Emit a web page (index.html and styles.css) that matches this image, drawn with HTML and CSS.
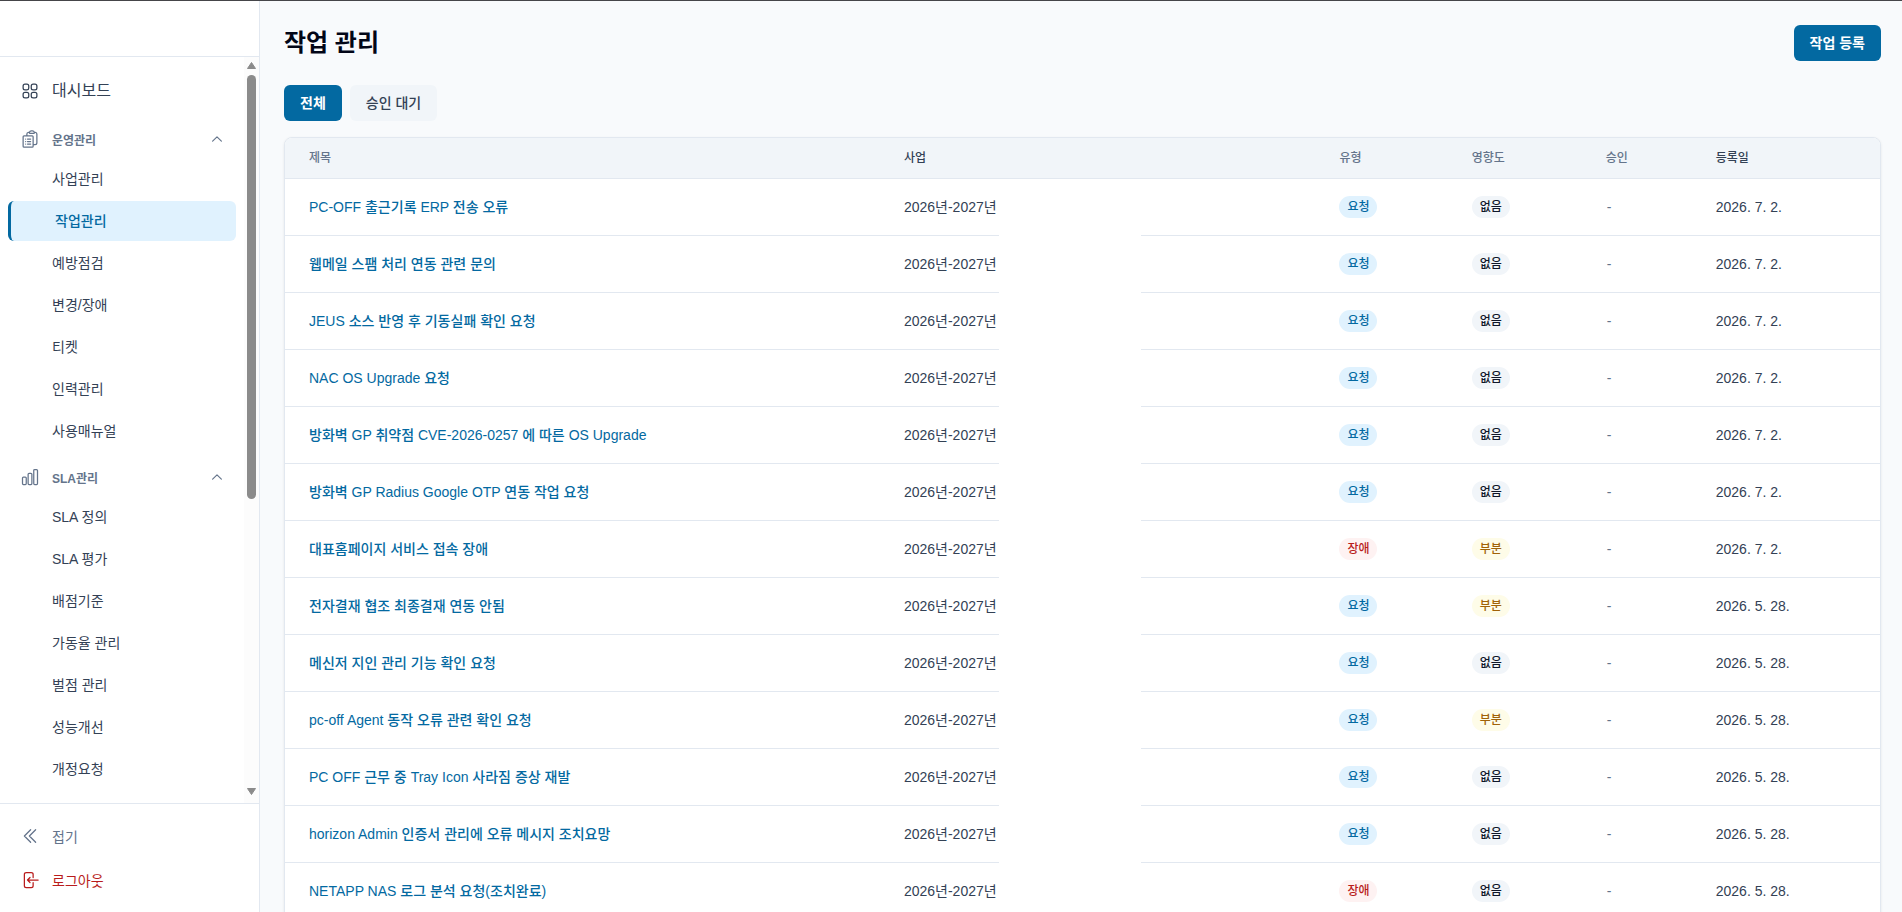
FILE: index.html
```html
<!DOCTYPE html>
<html lang="ko">
<head>
  <meta charset="UTF-8">
  <meta name="viewport" content="width=device-width, initial-scale=1.0">
  <title>작업 관리</title>
  <link rel="stylesheet" href="styles.css">
</head>
<body>
  <aside class="sidebar">
    <div class="sidebar-header"></div>

    <div class="sidebar-body">
      <nav class="menu">
        <a href="#" class="menu-top">
          <svg class="icon" viewBox="0 0 24 24"><path d="M3.75 6A2.25 2.25 0 0 1 6 3.75h2.25A2.25 2.25 0 0 1 10.5 6v2.25a2.25 2.25 0 0 1-2.25 2.25H6a2.25 2.25 0 0 1-2.25-2.25V6ZM3.75 15.75A2.25 2.25 0 0 1 6 13.5h2.25a2.25 2.25 0 0 1 2.25 2.25V18a2.25 2.25 0 0 1-2.25 2.25H6A2.25 2.25 0 0 1 3.75 18v-2.25ZM13.5 6a2.25 2.25 0 0 1 2.25-2.25H18A2.25 2.25 0 0 1 20.25 6v2.25A2.25 2.25 0 0 1 18 10.5h-2.25a2.25 2.25 0 0 1-2.25-2.25V6ZM13.5 15.75a2.25 2.25 0 0 1 2.25-2.25H18a2.25 2.25 0 0 1 2.25 2.25V18A2.25 2.25 0 0 1 18 20.25h-2.25A2.25 2.25 0 0 1 13.5 18v-2.25Z"/></svg>
          대시보드
        </a>

        <button type="button" class="menu-group">
          <svg class="icon" viewBox="0 0 24 24"><path d="M9 12h3.75M9 15h3.75M9 18h3.75m3 .75H18a2.25 2.25 0 0 0 2.25-2.25V6.108c0-1.135-.845-2.098-1.976-2.192a48.424 48.424 0 0 0-1.123-.08m-5.801 0c-.065.21-.1.433-.1.664 0 .414.336.75.75.75h4.5a.75.75 0 0 0 .75-.75 2.25 2.25 0 0 0-.1-.664m-5.8 0A2.251 2.251 0 0 1 13.5 2.25H15c1.012 0 1.867.668 2.15 1.586m-5.8 0c-.376.023-.75.05-1.124.08C9.095 4.01 8.25 4.973 8.25 6.108V8.25m0 0H4.875c-.621 0-1.125.504-1.125 1.125v11.25c0 .621.504 1.125 1.125 1.125h9.75c.621 0 1.125-.504 1.125-1.125V9.375c0-.621-.504-1.125-1.125-1.125H8.25ZM6.75 12h.008v.008H6.75V12Zm0 3h.008v.008H6.75V15Zm0 3h.008v.008H6.75V18Z"/></svg>
          <span>운영관리</span>
          <svg class="chevron" viewBox="0 0 24 24"><path d="m4.5 15.75 7.5-7.5 7.5 7.5"/></svg>
        </button>
        <ul class="submenu">
          <li><a href="#">사업관리</a></li>
          <li><a href="#" class="active">작업관리</a></li>
          <li><a href="#">예방점검</a></li>
          <li><a href="#">변경/장애</a></li>
          <li><a href="#">티켓</a></li>
          <li><a href="#">인력관리</a></li>
          <li><a href="#">사용매뉴얼</a></li>
        </ul>

        <button type="button" class="menu-group">
          <svg class="icon" viewBox="0 0 24 24"><path d="M3 13.125C3 12.504 3.504 12 4.125 12h2.25c.621 0 1.125.504 1.125 1.125v6.75C7.5 20.496 6.996 21 6.375 21h-2.25A1.125 1.125 0 0 1 3 19.875v-6.75ZM9.75 8.625c0-.621.504-1.125 1.125-1.125h2.25c.621 0 1.125.504 1.125 1.125v11.25c0 .621-.504 1.125-1.125 1.125h-2.25a1.125 1.125 0 0 1-1.125-1.125V8.625ZM16.5 4.125c0-.621.504-1.125 1.125-1.125h2.25C20.496 3 21 3.504 21 4.125v15.75c0 .621-.504 1.125-1.125 1.125h-2.25a1.125 1.125 0 0 1-1.125-1.125V4.125Z"/></svg>
          <span>SLA관리</span>
          <svg class="chevron" viewBox="0 0 24 24"><path d="m4.5 15.75 7.5-7.5 7.5 7.5"/></svg>
        </button>
        <ul class="submenu">
          <li><a href="#">SLA 정의</a></li>
          <li><a href="#">SLA 평가</a></li>
          <li><a href="#">배점기준</a></li>
          <li><a href="#">가동율 관리</a></li>
          <li><a href="#">벌점 관리</a></li>
          <li><a href="#">성능개선</a></li>
          <li><a href="#">개정요청</a></li>
        </ul>
      </nav>

      <div class="scrollbar">
        <svg class="scroll-arrow" viewBox="0 0 9 7"><path d="M4.5.5 8.5 6.5h-8z"/></svg>
        <div class="scroll-track"><div class="scroll-thumb"></div></div>
        <svg class="scroll-arrow" viewBox="0 0 9 7"><path d="M4.5 6.5.5.5h8z"/></svg>
      </div>
    </div>

    <div class="sidebar-footer">
      <button type="button" class="footer-button">
        <svg class="icon" viewBox="0 0 24 24"><path d="m18.75 4.5-7.5 7.5 7.5 7.5m-6-15L5.25 12l7.5 7.5"/></svg>
        접기
      </button>
      <button type="button" class="footer-button logout">
        <svg class="icon" viewBox="0 0 24 24"><path d="M15.75 9V5.25A2.25 2.25 0 0 0 13.5 3h-6a2.25 2.25 0 0 0-2.25 2.25v13.5A2.25 2.25 0 0 0 7.5 21h6a2.25 2.25 0 0 0 2.25-2.25V15M12 9l-3 3m0 0 3 3m-3-3h12.75"/></svg>
        로그아웃
      </button>
    </div>
  </aside>

  <main class="content">
    <div class="page-header">
      <h1>작업 관리</h1>
      <button type="button" class="btn btn-primary">작업 등록</button>
    </div>

    <div class="tabs">
      <button type="button" class="btn btn-primary">전체</button>
      <button type="button" class="btn btn-light">승인 대기</button>
    </div>

    <div class="card">
      <table class="task-table">
        <colgroup>
          <col class="col-title">
          <col class="col-project">
          <col class="col-type">
          <col class="col-impact">
          <col class="col-approval">
          <col class="col-date">
        </colgroup>
        <thead>
          <tr>
            <th>제목</th>
            <th class="sortable">사업</th>
            <th>유형</th>
            <th>영향도</th>
            <th>승인</th>
            <th class="sortable">등록일</th>
          </tr>
        </thead>
        <tbody id="task-rows"></tbody>
      </table>
    </div>
  </main>

  <script>
    const tasks = [
      { title: "PC-OFF 출근기록 ERP 전송 오류", type: "요청", impact: "없음", date: "2026. 7. 2." },
      { title: "웹메일 스팸 처리 연동 관련 문의", type: "요청", impact: "없음", date: "2026. 7. 2." },
      { title: "JEUS 소스 반영 후 기동실패 확인 요청", type: "요청", impact: "없음", date: "2026. 7. 2." },
      { title: "NAC OS Upgrade 요청", type: "요청", impact: "없음", date: "2026. 7. 2." },
      { title: "방화벽 GP 취약점 CVE-2026-0257 에 따른 OS Upgrade", type: "요청", impact: "없음", date: "2026. 7. 2." },
      { title: "방화벽 GP Radius Google OTP 연동 작업 요청", type: "요청", impact: "없음", date: "2026. 7. 2." },
      { title: "대표홈페이지 서비스 접속 장애", type: "장애", impact: "부분", date: "2026. 7. 2." },
      { title: "전자결재 협조 최종결재 연동 안됨", type: "요청", impact: "부분", date: "2026. 5. 28." },
      { title: "메신저 지인 관리 기능 확인 요청", type: "요청", impact: "없음", date: "2026. 5. 28." },
      { title: "pc-off Agent 동작 오류 관련 확인 요청", type: "요청", impact: "부분", date: "2026. 5. 28." },
      { title: "PC OFF 근무 중 Tray Icon 사라짐 증상 재발", type: "요청", impact: "없음", date: "2026. 5. 28." },
      { title: "horizon Admin 인증서 관리에 오류 메시지 조치요망", type: "요청", impact: "없음", date: "2026. 5. 28." },
      { title: "NETAPP NAS 로그 분석 요청(조치완료)", type: "장애", impact: "없음", date: "2026. 5. 28." },
    ];

    // Badge color for each type / impact value
    const badgeClass = {
      "요청": "badge-blue",
      "장애": "badge-red",
      "부분": "badge-yellow",
      "없음": "badge-gray",
    };

    document.getElementById("task-rows").innerHTML = tasks.map((task) => `<tr>
        <td><a href="#" class="task-link">${task.title}</a></td>
        <td class="project">2026년-2027년</td>
        <td><span class="badge ${badgeClass[task.type]}">${task.type}</span></td>
        <td><span class="badge ${badgeClass[task.impact]}">${task.impact}</span></td>
        <td class="approval">-</td>
        <td>${task.date}</td>
      </tr>`).join("");
  </script>
</body>
</html>
```
FILE: styles.css
```css
* {
  box-sizing: border-box;
}

body {
  margin: 0;
  height: 100vh;
  display: flex;
  overflow: hidden;
  border-top: 1px solid #454549;
  background-color: #f8fafc;
  color: #334155;
  font-family: "Liberation Sans", Arial, "Noto Sans CJK KR", sans-serif;
  font-size: 14px;
  line-height: 20px;
}

a {
  color: inherit;
  text-decoration: none;
}

button {
  border: none;
  background: none;
  font-family: inherit;
  cursor: pointer;
}

/* Sidebar */
.sidebar {
  width: 260px;
  flex-shrink: 0;
  display: flex;
  flex-direction: column;
  background-color: #fff;
  border-right: 1px solid #e2e8f0;
}

.sidebar-header {
  height: 56px;
  flex-shrink: 0;
  border-bottom: 1px solid #e2e8f0;
}

.sidebar-body {
  flex: 1;
  min-height: 0;
  display: flex;
}

.menu {
  flex: 1;
  padding: 12px 8px;
  overflow: hidden;
}

.icon {
  width: 20px;
  height: 20px;
  flex-shrink: 0;
}

.icon,
.chevron {
  fill: none;
  stroke: currentColor;
  stroke-width: 1.5;
  stroke-linecap: round;
  stroke-linejoin: round;
}

.menu-top {
  display: flex;
  align-items: center;
  gap: 12px;
  height: 44px;
  padding: 0 12px;
  font-size: 16px;
}

.menu-group {
  display: flex;
  align-items: center;
  gap: 12px;
  width: 100%;
  height: 40px;
  margin-top: 6px;
  padding: 0 12px;
  color: #64748b;
  font-size: 12px;
  font-weight: 600;
}

.chevron {
  width: 14px;
  height: 14px;
  margin-left: auto;
  stroke-width: 2;
}

.submenu {
  display: flex;
  flex-direction: column;
  gap: 2px;
  margin: 0;
  padding: 0;
  list-style: none;
}

.submenu a {
  display: flex;
  align-items: center;
  height: 40px;
  padding-left: 44px;
  border-radius: 6px;
}

.submenu .active {
  border-left: 3px solid #0369a1;
  background-color: #e0f2fe;
  color: #0369a1;
  font-weight: 500;
}

.scrollbar {
  display: flex;
  flex-direction: column;
  align-items: center;
  width: 15px;
  padding: 5px 0 8px;
  background-color: #fcfcfc;
}

.scroll-arrow {
  width: 9px;
  height: 7px;
  fill: #8b8b8b;
  stroke: #8b8b8b;
  stroke-linejoin: round;
}

.scroll-track {
  flex: 1;
  width: 9px;
  padding: 6px 0;
}

.scroll-thumb {
  height: 60%;
  border-radius: 5px;
  background-color: #8b8b8b;
}

.sidebar-footer {
  padding: 10px 8px;
  border-top: 1px solid #e2e8f0;
}

.footer-button {
  display: flex;
  align-items: center;
  gap: 12px;
  width: 100%;
  height: 44px;
  padding: 0 12px;
  color: #64748b;
  font-size: 14px;
}

.logout {
  color: #b91c1c;
}

/* Content */
.content {
  flex: 1;
  min-width: 0;
  padding: 24px 21px 24px 24px;
  overflow: hidden;
}

.page-header {
  display: flex;
  align-items: center;
  justify-content: space-between;
  margin-bottom: 24px;
}

h1 {
  margin: 0;
  color: #020617;
  font-size: 24px;
  font-weight: 700;
  line-height: 32px;
}

.btn {
  height: 36px;
  padding: 0 16px 2px;
  border-radius: 6px;
  font-size: 14px;
  font-weight: 500;
}

.btn-primary {
  background-color: #0369a1;
  color: #fff;
  font-weight: 600;
}

.btn-light {
  background-color: #f1f5f9;
  color: #334155;
}

.tabs {
  display: flex;
  gap: 8px;
  margin-bottom: 16px;
}

.card {
  overflow: hidden;
  border: 1px solid #e2e8f0;
  border-radius: 8px;
  background-color: #fff;
  box-shadow: 0 1px 3px rgba(0, 0, 0, 0.08);
}

.task-table {
  width: 100%;
  table-layout: fixed;
  border-collapse: separate;
  border-spacing: 0;
}

.col-title {
  width: 37.3%;
}

.col-project {
  width: 27.3%;
}

.col-type {
  width: 8.3%;
}

.col-impact {
  width: 8.4%;
}

.col-approval {
  width: 6.9%;
}

.col-date {
  width: 11.8%;
}

.task-table th {
  height: 41px;
  padding: 0 24px;
  border-bottom: 1px solid #e2e8f0;
  background-color: #f1f5f9;
  color: #64748b;
  font-size: 12px;
  font-weight: 500;
  text-align: left;
}

.task-table th.sortable {
  color: #334155;
}

.task-table td {
  height: 57px;
  padding: 0 24px;
  border-bottom: 1px solid #e2e8f0;
  white-space: nowrap;
}

.task-link {
  color: #0369a1;
  font-weight: 500;
}

.project {
  position: relative;
}

/* Blank area over the rest of the project name */
.project::after {
  content: "";
  position: absolute;
  top: 0;
  bottom: -1px;
  left: 119px;
  width: 142px;
  background-color: #fff;
}

.task-table .approval {
  padding-left: 25px;
  color: #64748b;
}

.badge {
  display: inline-block;
  padding: 1px 8px;
  border-radius: 11px;
  font-size: 12px;
  font-weight: 500;
  vertical-align: middle;
}

.badge-blue {
  background-color: #e0f2fe;
  color: #0369a1;
}

.badge-red {
  background-color: #fef2f2;
  color: #b91c1c;
}

.badge-yellow {
  background-color: #fefce8;
  color: #a16207;
}

.badge-gray {
  background-color: #f1f5f9;
  color: #0f172a;
}
```
